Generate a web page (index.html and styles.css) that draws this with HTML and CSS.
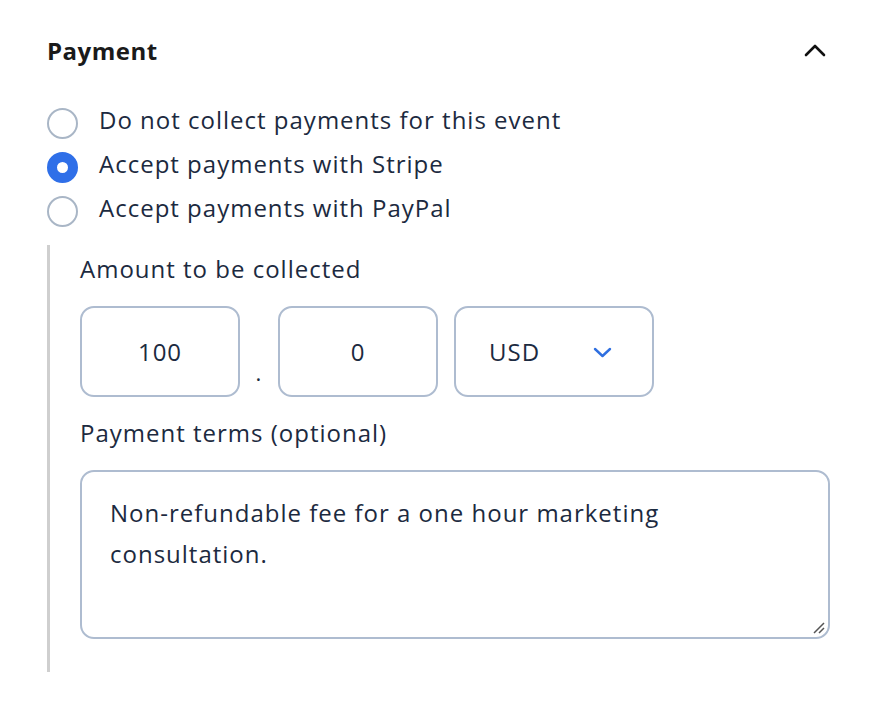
FILE: index.html
```html
<!DOCTYPE html>
<html lang="en">
<head>
    <meta charset="UTF-8">
    <meta name="viewport" content="width=device-width, initial-scale=1.0">
    <title>Payment</title>
    <link rel="stylesheet" href="styles.css">
</head>
<body>
    <section class="panel">
        <header class="panel-head">
            <h2>Payment</h2>
            <svg class="collapse" width="24" height="16" viewBox="0 0 24 16">
                <path d="M3 13 L12 4 L21 13" fill="none" stroke="#111" stroke-width="2.6" stroke-linecap="round" stroke-linejoin="round"/>
            </svg>
        </header>
        <div class="options">
            <label class="radio"><span class="dot"></span>Do not collect payments for this event</label>
            <label class="radio"><span class="dot checked"></span>Accept payments with Stripe</label>
            <label class="radio"><span class="dot"></span>Accept payments with PayPal</label>
        </div>
        <div class="details">
            <div class="field-label">Amount to be collected</div>
            <div class="amount-row">
                <div class="box">100</div>
                <span class="sep">.</span>
                <div class="box">0</div>
                <div class="box currency">
                    <span>USD</span>
                    <svg width="19" height="12" viewBox="0 0 19 12">
                        <path d="M2 3 L9.5 10 L17 3" fill="none" stroke="#2f6fe0" stroke-width="2.4" stroke-linecap="round" stroke-linejoin="round"/>
                    </svg>
                </div>
            </div>
            <div class="field-label">Payment terms (optional)</div>
            <div class="terms">
                Non-refundable fee for a one hour marketing<br>consultation.
                <svg class="grip" width="14" height="14" viewBox="0 0 14 14">
                    <path d="M2 12 L12 2 M7 12 L12 7" stroke="#555" stroke-width="1.5"/>
                </svg>
            </div>
        </div>
    </section>
</body>
</html>
```

FILE: styles.css
```css
body {
    margin: 0;
    background: #fff;
    font-family: "Open Sans", "Lato", sans-serif;
    color: #1c2a40;
    letter-spacing: 1px;
}
.panel {
    padding: 30px 46px 30px 47px;
}
.panel-head {
    display: flex;
    justify-content: space-between;
    align-items: center;
    height: 40px;
}
.panel-head h2 {
    margin: 0;
    font-size: 24px;
    font-weight: 700;
    letter-spacing: 0.5px;
    color: #1a1a1a;
}
.collapse {
    margin-right: 3px;
}
.options {
    margin-top: 35px;
    display: flex;
    flex-direction: column;
    gap: 14px;
}
.radio {
    display: flex;
    align-items: center;
    height: 30px;
    line-height: 30px;
    font-size: 24px;
}
.dot {
    width: 27px;
    height: 27px;
    border: 2px solid #a9b6c6;
    border-radius: 50%;
    margin-right: 21px;
    margin-top: 6px;
    box-sizing: content-box;
    flex: none;
}
.dot.checked {
    width: 11px;
    height: 11px;
    border: 10px solid #2f6fe8;
    background: #fff;
}
.details {
    margin-top: 22px;
    border-left: 3px solid #cfcfcf;
    padding: 9px 0 33px 30px;
}
.field-label {
    font-size: 24px;
    height: 30px;
    line-height: 30px;
}
.amount-row {
    display: flex;
    align-items: flex-end;
    margin: 22px 0 21px;
}
.box {
    width: 160px;
    height: 91px;
    border: 2px solid #aebcd0;
    border-radius: 14px;
    box-sizing: border-box;
    display: flex;
    align-items: center;
    justify-content: center;
    font-size: 24px;
}
.sep {
    width: 38px;
    text-align: center;
    font-size: 22px;
    line-height: 22px;
    margin-bottom: 14px;
}
.box.currency {
    margin-left: 16px;
    justify-content: flex-start;
    padding-left: 33px;
    width: 200px;
    gap: 53px;
}
.terms {
    position: relative;
    margin-top: 22px;
    height: 169px;
    border: 2px solid #aebcd0;
    border-radius: 14px;
    padding: 20px 28px;
    box-sizing: border-box;
    font-size: 24px;
    line-height: 41px;
}
.grip {
    position: absolute;
    right: 2px;
    bottom: 2px;
}
```
